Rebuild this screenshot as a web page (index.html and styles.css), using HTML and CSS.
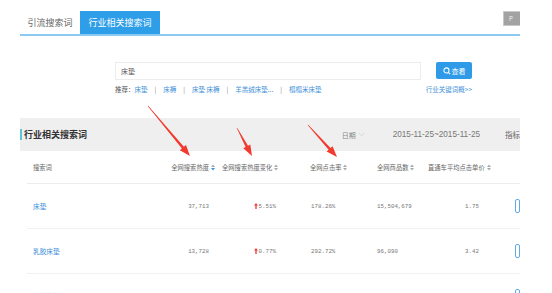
FILE: index.html
```html
<!DOCTYPE html>
<html lang="zh-CN">
<head>
    <meta charset="UTF-8">
    <title>行业相关搜索词</title>
    <link rel="stylesheet" href="styles.css">
</head>
<body>

<div class="page">
    <!-- Tabs -->
    <div class="tabs">
        <div class="tab">引流搜索词</div>
        <div class="tab active">行业相关搜索词</div>
        <div class="tab-btn">P</div>
    </div>

    <!-- Search -->
    <div class="search">
        <div class="search-row">
            <div class="search-input">床垫</div>
            <button class="search-btn">
                <svg class="search-icon" viewBox="0 0 10 10"><circle cx="4.3" cy="4.3" r="3.2" fill="none" stroke="#fff" stroke-width="1.3"/><path d="M6.6 6.6L9 9" stroke="#fff" stroke-width="1.4"/></svg>查看
            </button>
        </div>
        <div class="hint-row">
            <div class="hints">推荐：<a>床垫</a><span class="sep">|</span><a>床褥</a><span class="sep">|</span><a>床垫 床褥</a><span class="sep">|</span><a>羊羔绒床垫...</a><span class="sep">|</span><a>榻榻米床垫</a></div>
            <a class="more">行业关键词概&gt;&gt;</a>
        </div>
    </div>

    <!-- Panel head -->
    <div class="panel-head">
        <div class="panel-title">行业相关搜索词</div>
        <div class="date-label">日期<svg class="chev" viewBox="0 0 8 5"><path d="M0.5 0.5L4 4L7.5 0.5" fill="none" stroke="#ccc" stroke-width="0.8"/></svg></div>
        <div class="date-range">2015-11-25~2015-11-25</div>
        <div class="metric">指标</div>
    </div>

    <!-- Table -->
    <div class="table">
        <div class="row head">
            <div class="c1">搜索词</div>
            <div class="c2">全网搜索热度<svg class="sort" viewBox="0 0 4 7"><path d="M0 3L2 0.5L4 3Z" fill="#aaa"/><path d="M0 4L2 6.5L4 4Z" fill="#3a92e0"/></svg></div>
            <div class="c3">全网搜索热度变化<svg class="sort" viewBox="0 0 4 7"><path d="M0 3L2 0.5L4 3Z" fill="#aaa"/><path d="M0 4L2 6.5L4 4Z" fill="#aaa"/></svg></div>
            <div class="c4">全网点击率<svg class="sort" viewBox="0 0 4 7"><path d="M0 3L2 0.5L4 3Z" fill="#aaa"/><path d="M0 4L2 6.5L4 4Z" fill="#aaa"/></svg></div>
            <div class="c5">全网商品数<svg class="sort" viewBox="0 0 4 7"><path d="M0 3L2 0.5L4 3Z" fill="#aaa"/><path d="M0 4L2 6.5L4 4Z" fill="#aaa"/></svg></div>
            <div class="c6">直通车平均点击单价<svg class="sort" viewBox="0 0 4 7"><path d="M0 3L2 0.5L4 3Z" fill="#aaa"/><path d="M0 4L2 6.5L4 4Z" fill="#aaa"/></svg></div>
            <div class="c7"></div>
        </div>
        <div class="row">
            <div class="c1"><a>床垫</a></div>
            <div class="c2 num">37,713</div>
            <div class="c3 num"><svg class="up" viewBox="0 0 4 6"><path d="M2 0L4 2.5H2.7V6H1.3V2.5H0Z" fill="#f04040"/></svg>5.51%</div>
            <div class="c4 num">178.26%</div>
            <div class="c5 num">15,504,679</div>
            <div class="c6 num">1.75</div>
            <div class="c7"><span class="act"></span></div>
        </div>
        <div class="row">
            <div class="c1"><a>乳胶床垫</a></div>
            <div class="c2 num">13,728</div>
            <div class="c3 num"><svg class="up" viewBox="0 0 4 6"><path d="M2 0L4 2.5H2.7V6H1.3V2.5H0Z" fill="#f04040"/></svg>0.77%</div>
            <div class="c4 num">292.72%</div>
            <div class="c5 num">96,090</div>
            <div class="c6 num">3.42</div>
            <div class="c7"><span class="act"></span></div>
        </div>
        <div class="row">
            <div class="c1"><a>椰棕床垫</a></div>
            <div class="c2 num">4,317</div>
            <div class="c3 num"><svg class="up" viewBox="0 0 4 6"><path d="M2 0L4 2.5H2.7V6H1.3V2.5H0Z" fill="#f04040"/></svg>11.45%</div>
            <div class="c4 num">158.31%</div>
            <div class="c5 num">128,337</div>
            <div class="c6 num">2.21</div>
            <div class="c7"><span class="act"></span></div>
        </div>
    </div>
</div>

<!-- Red annotation arrows drawn over the screenshot -->
<svg class="arrows" viewBox="0 0 552 293">
    <polygon points="147.8,106.2 181.9,148.4 179.8,150.2 190,156 186.0,145.0 183.9,146.8 148.2,105.8" fill="#f23a2f"/>
    <polygon points="236.7,128.1 245.6,146.9 243.3,148.2 252,156 250.3,144.4 248.0,145.7 237.3,127.9" fill="#f23a2f"/>
    <polygon points="307.8,125.2 328.6,149.7 326.6,151.5 337,157 332.6,146.2 330.6,148.0 308.2,124.8" fill="#f23a2f"/>
</svg>

</body>
</html>
```

FILE: styles.css
```css
/* Basic reset */
body, html {
    margin: 0;
    padding: 0;
    background-color: #fff;
    font-family: "Noto Sans CJK SC", "Liberation Sans", sans-serif;
    color: #666;
}

body {
    position: relative;
    width: 552px;
    height: 293px;
    overflow: hidden;
}

a {
    color: #3d8fd9;
}

/* Page clipped at the right like the screenshot */
.page {
    width: 500px;
    margin-left: 20px;
    padding-top: 11px;
    overflow: hidden;
    height: 282px;
}

/* Tabs */
.tabs {
    display: flex;
    height: 23px;
    border-bottom: 2px solid #8ccaf2;
}

.tab {
    width: 60px;
    font-size: 9px;
    line-height: 23px;
    text-align: center;
    color: #666;
}

.tab.active {
    width: 80px;
    background-color: #2e9ee9;
    color: #fff;
}

.tab-btn {
    flex-shrink: 0;
    margin-left: auto;
    margin-right: -14px;
    width: 31px;
    height: 15px;
    background-color: #a3a3a3;
    border: 1px solid #c8c8c8;
    box-sizing: border-box;
    color: #f0f0f0;
    font-size: 6px;
    line-height: 13px;
    padding-left: 5px;
}

/* Search */
.search {
    width: 357px;
    margin-left: 95px;
    margin-top: 26px;
}

.search-row {
    display: flex;
    align-items: flex-start;
}

.search-input {
    width: 306px;
    height: 18px;
    box-sizing: border-box;
    border: 1px solid #ececec;
    font-size: 7px;
    line-height: 16px;
    padding-left: 5px;
    color: #555;
}

.search-btn {
    margin-left: 15px;
    width: 36px;
    height: 17px;
    border: none;
    border-radius: 2px;
    background-color: #2e9ae8;
    color: #fff;
    font-family: "Noto Sans CJK SC", sans-serif;
    font-size: 7px;
    padding: 0;
    display: flex;
    align-items: center;
    justify-content: center;
}

.search-icon {
    width: 8px;
    height: 8px;
    margin-right: 1px;
}

.hint-row {
    display: flex;
    justify-content: space-between;
    margin-top: 5px;
    font-size: 6.5px;
    line-height: 9px;
}

.hints {
    color: #555;
}

.sep {
    color: #888;
    margin: 0 7px;
}

.more {
    color: #3d8fd9;
}

/* Gray panel header */
.panel-head {
    display: flex;
    align-items: center;
    height: 33px;
    margin-top: 24px;
    background-color: #efefef;
}

.panel-title {
    border-left: 2px solid #5bc6d8;
    padding-left: 2px;
    font-size: 9px;
    line-height: 11px;
    font-weight: bold;
    color: #333;
}

.date-label {
    margin-left: auto;
    font-size: 7px;
    color: #888;
    display: flex;
    align-items: center;
}

.chev {
    width: 7px;
    height: 5px;
    margin-left: 2px;
}

.date-range {
    margin-left: 28px;
    font-family: "Liberation Sans", sans-serif;
    font-size: 8.2px;
    color: #777;
}

.metric {
    margin-left: 25px;
    width: 15px;
    white-space: nowrap;
    font-size: 7.5px;
    color: #666;
}

/* Table */
.table {
    margin-left: 7px;
}

.row {
    display: grid;
    grid-template-columns: 133px 58px 72px 80px 57px 73px 20px;
    align-items: center;
    height: 44px;
    border-bottom: 1px solid #f1f1f1;
    font-size: 6.7px;
}

.row.head {
    height: 32px;
    font-size: 6.3px;
    color: #666;
    border-bottom: 1px solid #ececec;
}

.row > div {
    display: flex;
    align-items: center;
    white-space: nowrap;
}

.c1 {
    padding-left: 6px;
}

.c2 {
    justify-content: flex-end;
    padding-right: 3px;
}

.c3 {
    padding-left: 4px;
}

.c4 {
    padding-left: 20px;
}

.c5 {
    padding-left: 7px;
}

.c6 {
    padding-left: 1px;
}

.sort {
    width: 4px;
    height: 7px;
    margin-left: 2px;
}

/* Number cells */
.num {
    font-family: "Liberation Mono", monospace;
    font-size: 5.8px;
    color: #777;
}

.c2.num {
    padding-right: 9px;
}

.c3.num {
    justify-content: flex-end;
    padding-left: 0;
    padding-right: 14px;
}

.c4.num {
    padding-left: 21px;
}

.c6.num {
    justify-content: flex-end;
    padding-left: 0;
    padding-right: 21px;
}

.up {
    width: 4px;
    height: 6px;
    margin-right: 1px;
}

.act {
    display: block;
    margin-left: 15px;
    width: 30px;
    height: 14px;
    box-sizing: border-box;
    border: 1px solid #62a9ea;
    border-radius: 2px;
}

/* Annotation overlay */
.arrows {
    position: absolute;
    left: 0;
    top: 0;
    width: 552px;
    height: 293px;
}
```
